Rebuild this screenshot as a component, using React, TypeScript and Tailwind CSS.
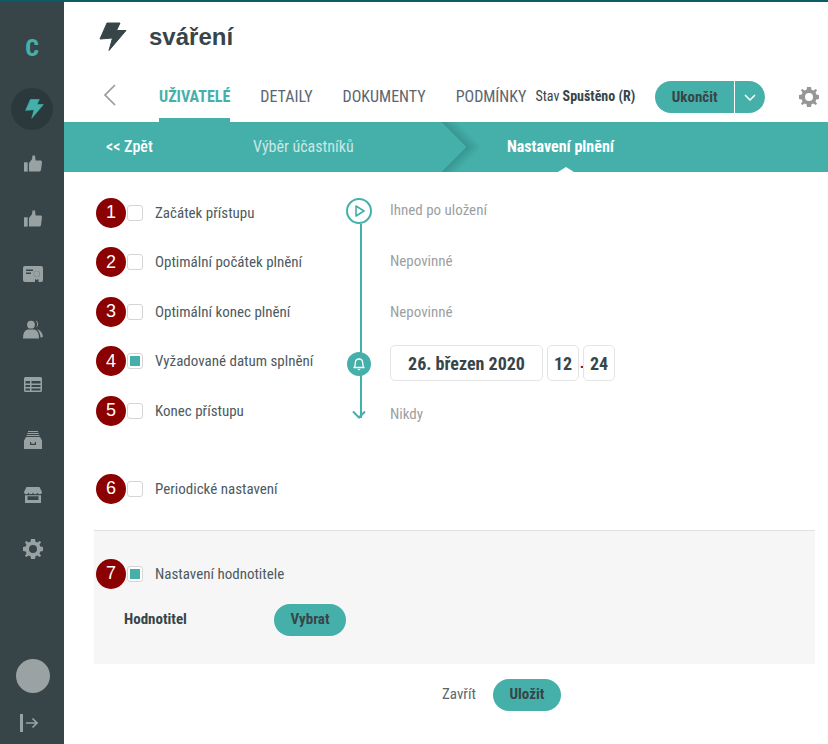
import React from "react";

const font = "font-['Roboto_Condensed','Roboto',sans-serif] [font-stretch:75%]";

const Bolt = ({ className }: { className: string }) => (
  <svg viewBox="0 0 28 30" className={className} fill="currentColor" stroke="currentColor" strokeWidth="1" strokeLinejoin="round">
    <path d="M8 1H21L17.5 8.5H27L10 28.5L13.5 16L1 17Z" />
  </svg>
);

const Thumb = () => (
  <svg viewBox="0 0 18 17" className="h-[17px] w-[18px]" fill="currentColor">
    <rect x="0" y="7.3" width="3.7" height="9.3" />
    <path d="M5 8L8 4.2L8.5 0.5H11L11.6 5.5H16.8Q18 5.8 18 7.2L17 15Q16.6 16.6 15 16.6H5Z" />
  </svg>
);

const Certificate = () => (
  <svg viewBox="0 0 20 16" className="h-4 w-5" fill="currentColor">
    <path
      fillRule="evenodd"
      d="M2 0H18A2 2 0 0 1 20 2V14A2 2 0 0 1 18 16H15.5V13L13.8 14L12 13V16H2A2 2 0 0 1 0 14V2A2 2 0 0 1 2 0ZM3 3.5V5H10V3.5ZM3 6.5V8H8V6.5ZM13.8 5A3 3 0 1 0 13.8 11A3 3 0 1 0 13.8 5Z"
    />
    <circle cx="13.8" cy="8" r="3" />
  </svg>
);

const Users = () => (
  <svg viewBox="0 0 20 19" className="h-[19px] w-5" fill="currentColor">
    <circle cx="8" cy="4.7" r="3.9" />
    <path d="M0 18.5Q0 10.5 4.5 9.5H11.5Q16 10.5 16 18.5Z" />
    <path d="M12.5 0.3A4 4 0 0 1 13 7.6A6 6 0 0 0 12.5 0.3Z" />
    <path d="M14 9Q19.5 11 20 17L17.5 17.5Q17 12 14 9Z" />
  </svg>
);

const TableIcon = () => (
  <svg viewBox="0 0 18 15" className="h-[15px] w-[18px]" fill="currentColor">
    <path
      fillRule="evenodd"
      d="M1.5 0H16.5A1.5 1.5 0 0 1 18 1.5V13.5A1.5 1.5 0 0 1 16.5 15H1.5A1.5 1.5 0 0 1 0 13.5V1.5A1.5 1.5 0 0 1 1.5 0ZM1.5 4V6.5H6V4ZM7.5 4V6.5H16.5V4ZM1.5 8V10H6V8ZM7.5 8V10H16.5V8ZM1.5 11.5V13.5H6V11.5ZM7.5 11.5V13.5H16.5V11.5Z"
    />
  </svg>
);

const Drawer = () => (
  <svg viewBox="0 0 18 18" className="h-[18px] w-[18px]" fill="currentColor">
    <path d="M4 0H14V1H4ZM3.2 2H14.8V3H3.2ZM2.6 4H15.4V5H2.6Z" />
    <path fillRule="evenodd" d="M2 6H16L18 9.5V18H0V9.5ZM6 11V14H12V11H10.8V12.8H7.2V11Z" />
  </svg>
);

const Store = () => (
  <svg viewBox="0 0 18 16" className="h-4 w-[18px]" fill="currentColor">
    <path d="M2.5 0H15.5L18 5Q18 7.2 15.8 7.2Q13.5 7.2 13.4 5.6Q13.2 7.2 11.2 7.2Q9.2 7.2 9 5.6Q8.8 7.2 6.8 7.2Q4.8 7.2 4.6 5.6Q4.4 7.2 2.2 7.2Q0 7.2 0 5Z" />
    <path fillRule="evenodd" d="M1 8.2H17V16H1ZM3.5 9.2V13H14.5V9.2Z" />
  </svg>
);

const Gear = ({ className }: { className: string }) => (
  <svg viewBox="0 0 20 20" className={className} fill="currentColor">
    <path
      fillRule="evenodd"
      d="M8 0H12L12.5 2.7L14.4 3.5L16.7 1.9L18.1 3.3L16.5 5.6L17.3 7.5L20 8V12L17.3 12.5L16.5 14.4L18.1 16.7L16.7 18.1L14.4 16.5L12.5 17.3L12 20H8L7.5 17.3L5.6 16.5L3.3 18.1L1.9 16.7L3.5 14.4L2.7 12.5L0 12V8L2.7 7.5L3.5 5.6L1.9 3.3L3.3 1.9L5.6 3.5L7.5 2.7ZM10 6A4 4 0 1 0 10 14A4 4 0 1 0 10 6Z"
    />
  </svg>
);

const LogoutIcon = () => (
  <svg viewBox="0 0 18 18" className="h-[18px] w-[18px]" fill="none" stroke="currentColor">
    <path d="M1.5 0V18" strokeWidth="3" />
    <path d="M6 9H17M12.5 4.5L17 9L12.5 13.5" strokeWidth="1.6" />
  </svg>
);

const sideIcons = [
  { h: "h-[55px]", icon: <Thumb /> },
  { h: "h-[55px]", icon: <Thumb /> },
  { h: "h-[56px]", icon: <Certificate /> },
  { h: "h-[55px]", icon: <Users /> },
  { h: "h-[55px]", icon: <TableIcon /> },
  { h: "h-[55px]", icon: <Drawer /> },
  { h: "h-[55px]", icon: <Store /> },
  { h: "h-[54px]", icon: <Gear className="h-5 w-5" /> },
];

const Sidebar = () => (
  <div className="flex h-[742px] w-16 shrink-0 flex-col items-center bg-[#374549] text-[#98a2a3]">
    <div className="mt-[28px] text-[24px] leading-[36px] font-extrabold text-[#45b0aa]">C</div>
    <div className="mt-[22px] flex h-[42px] w-[42px] items-center justify-center rounded-full bg-[#2c393c] text-[#45b0aa]">
      <Bolt className="ml-1 h-[22px] w-[19px]" />
    </div>
    <div className="mt-[6px] ml-0.5 flex flex-col items-center">
      {sideIcons.map((item, i) => (
        <div key={i} className={`flex ${item.h} items-center justify-center`}>
          {item.icon}
        </div>
      ))}
    </div>
    <div className="mt-auto ml-0.5 h-[34px] w-[34px] rounded-full bg-[#9aa2a3]" />
    <div className="mt-[21px] mb-[12px] -translate-x-[3px]">
      <LogoutIcon />
    </div>
  </div>
);

const Badge = ({ n }: { n: number }) => (
  <div className="absolute top-1/2 -left-[31px] flex h-[30px] w-[30px] -translate-y-1/2 items-center justify-center rounded-full bg-[#8b0000] font-['Liberation_Sans',sans-serif] text-[18px] text-white [font-stretch:100%]">
    {n}
  </div>
);

const Check = ({ n, on, label }: { n: number; on?: boolean; label: string }) => (
  <div className="relative flex items-center">
    <Badge n={n} />
    <div className="flex h-4 w-4 items-center justify-center rounded-[3px] border border-[#d5d5d5] bg-white">
      {on && <div className="h-[10px] w-[10px] bg-[#45b0aa]" />}
    </div>
    <span className="ml-[12px] text-[15px] leading-5 text-[#4d5a61]">{label}</span>
  </div>
);

const rows = [
  { label: "Začátek přístupu", value: "Ihned po uložení", shift: "-translate-y-[3px]" },
  { label: "Optimální počátek plnění", value: "Nepovinné", shift: "-translate-y-px" },
  { label: "Optimální konec plnění", value: "Nepovinné", shift: "" },
  { label: "Vyžadované datum splnění", on: true, shift: "" },
  { label: "Konec přístupu", value: "Nikdy", shift: "translate-y-[3px]" },
];

const TimelineIcon = ({ index }: { index: number }) => {
  if (index === 0) {
    return (
      <div className="relative z-10 flex h-[26px] w-[26px] -translate-y-0.5 items-center justify-center rounded-full border-2 border-[#45b0aa] bg-white">
        <svg viewBox="0 0 10 12" className="ml-0.5 h-3 w-[10px]" fill="none" stroke="#45b0aa" strokeWidth="1.6">
          <path d="M1 1L9 6L1 11Z" strokeLinejoin="round" />
        </svg>
      </div>
    );
  }
  if (index === 3) {
    return (
      <div className="relative z-10 flex h-6 w-6 translate-y-[3px] items-center justify-center rounded-full bg-[#45b0aa]">
        <svg viewBox="0 0 12 14" className="h-[14px] w-3" fill="none" stroke="white" strokeWidth="1.3">
          <path d="M1 10.5C2.2 9.5 2.3 8 2.3 6C2.3 3.5 3.8 2 6 2C8.2 2 9.7 3.5 9.7 6C9.7 8 9.8 9.5 11 10.5Z" strokeLinejoin="round" />
          <path d="M4.8 12.5H7.2" />
        </svg>
      </div>
    );
  }
  if (index === 4) {
    return (
      <svg viewBox="0 0 14 9" className="relative z-10 mt-[7px] h-[9px] w-[14px]" fill="none" stroke="#45b0aa" strokeWidth="2">
        <path d="M1 1.5L7 7.5L13 1.5" />
      </svg>
    );
  }
  return null;
};

const Box = ({ className, text }: { className: string; text: string }) => (
  <div className={`flex h-9 items-center justify-center rounded-[5px] border border-[#e4e4e4] bg-white text-[#374549] ${className}`}>
    {text}
  </div>
);

const App = () => {
  return (
    <div className={`h-[744px] w-[828px] overflow-hidden bg-white ${font}`}>
      <div className="h-0.5 bg-[#0b5c66]" />
      <div className="flex">
        <Sidebar />
        <div className="min-w-0 flex-1">
          <div className="flex h-[70px] items-center pl-[35px]">
            <Bolt className="h-[30px] w-[28px] text-[#374549]" />
            <h1 className="ml-[22px] font-['Liberation_Sans',sans-serif] text-[24px] font-bold text-[#374549] [font-stretch:100%]">sváření</h1>
          </div>
          <div className="flex h-[50px] items-start pl-[39px]">
            <svg viewBox="0 0 13 22" className="mt-[12px] h-[22px] w-[13px]" fill="none" stroke="#9a9a9a" strokeWidth="1.7">
              <path d="M12 1L2 11L12 21" />
            </svg>
            <div className="ml-[43px] flex h-full gap-[30px] text-[16px]">
              <div className="flex h-full flex-col items-center border-b-[4px] border-[#45b0aa] pt-[13px] font-bold text-[#45b0aa]">UŽIVATELÉ</div>
              <div className="pt-[13px] text-[#5a6670]">DETAILY</div>
              <div className="pt-[13px] text-[#5a6670]">DOKUMENTY</div>
              <div className="pt-[13px] text-[#5a6670]">PODMÍNKY</div>
            </div>
            <div className="ml-[9px] pt-[14px] text-[14px] text-[#374549]">
              Stav <b>Spuštěno (R)</b>
            </div>
            <div className="mt-[9px] ml-5 flex h-8 w-[110px] rounded-full bg-[#45b0aa] text-[#374549]">
              <div className="flex flex-1 items-center justify-center border-r border-white text-[15px] font-bold">Ukončit</div>
              <div className="flex w-[30px] items-center justify-center">
                <svg viewBox="0 0 12 7" className="h-[7px] w-3" fill="none" stroke="white" strokeWidth="1.5">
                  <path d="M1 1L6 6L11 1" />
                </svg>
              </div>
            </div>
            <Gear className="mt-[15px] ml-[34px] h-5 w-5 text-[#969696]" />
          </div>
          <div className="relative flex h-[50px] items-center overflow-hidden bg-[#45b0aa] text-[16px] text-white">
            <div className="ml-[42px] w-[147px] font-medium">&lt;&lt; Zpět</div>
            <div className="text-[#c9e7e5]">Výběr účastníků</div>
            <div className="absolute top-0 left-[364.5px] h-[25px] w-[50px] bg-[linear-gradient(45deg,transparent_50%,#389690_50%,transparent_72%)]" />
            <div className="absolute bottom-0 left-[364.5px] h-[25px] w-[50px] bg-[linear-gradient(135deg,transparent_50%,#389690_50%,transparent_72%)]" />
            <div className="absolute left-[443px] font-bold">Nastavení plnění</div>
            <div className="absolute bottom-0 left-[494px] h-[5px] w-4 bg-white [clip-path:polygon(50%_0,100%_100%,0_100%)]" />
          </div>

          <div className="relative mt-[16px] pl-[63px]">
            <div className="absolute top-[36px] left-[296px] h-[194px] w-0.5 bg-[#45b0aa]" />
            {rows.map((row, i) => (
              <div key={row.label} className="flex h-[49.5px] items-center">
                <div className="w-[219px]">
                  <Check n={i + 1} on={row.on} label={row.label} />
                </div>
                <div className="flex w-[26px] justify-center">
                  <TimelineIcon index={i} />
                </div>
                {row.value ? (
                  <span className={`ml-[18px] text-[15px] text-[#9b9fa3] ${row.shift}`}>{row.value}</span>
                ) : (
                  <div className="ml-[18px] flex translate-y-0.5 items-center text-[18px] font-bold">
                    <Box className="w-[153px]" text="26. březen 2020" />
                    <Box className="ml-[4px] w-8" text="12" />
                    <span className="mx-[1px] w-[2px] text-[14px] text-[#8b0000]">.</span>
                    <Box className="w-8" text="24" />
                  </div>
                )}
              </div>
            ))}
            <div className="mt-[43px]">
              <Check n={6} label="Periodické nastavení" />
            </div>
          </div>

          <div className="mt-[31px] ml-[30px] h-[134px] w-[721px] border-t border-[#e2e2e2] bg-[#f6f6f6] pt-[33px] pl-[33px]">
            <Check n={7} on label="Nastavení hodnotitele" />
            <div className="mt-[20px] flex items-center">
              <span className="-ml-[3px] w-[150px] text-[15px] font-bold text-[#374549]">Hodnotitel</span>
              <button className="flex h-8 w-[72px] items-center justify-center rounded-full bg-[#45b0aa] text-[15px] font-bold text-[#374549]">Vybrat</button>
            </div>
          </div>

          <div className="mt-[15px] flex items-center pl-[378px]">
            <span className="text-[15px] text-[#5a6670]">Zavřít</span>
            <button className="ml-[17px] flex h-8 w-[68px] items-center justify-center rounded-full bg-[#45b0aa] text-[15px] font-bold text-[#374549]">Uložit</button>
          </div>
        </div>
      </div>
    </div>
  );
};

export default App;
